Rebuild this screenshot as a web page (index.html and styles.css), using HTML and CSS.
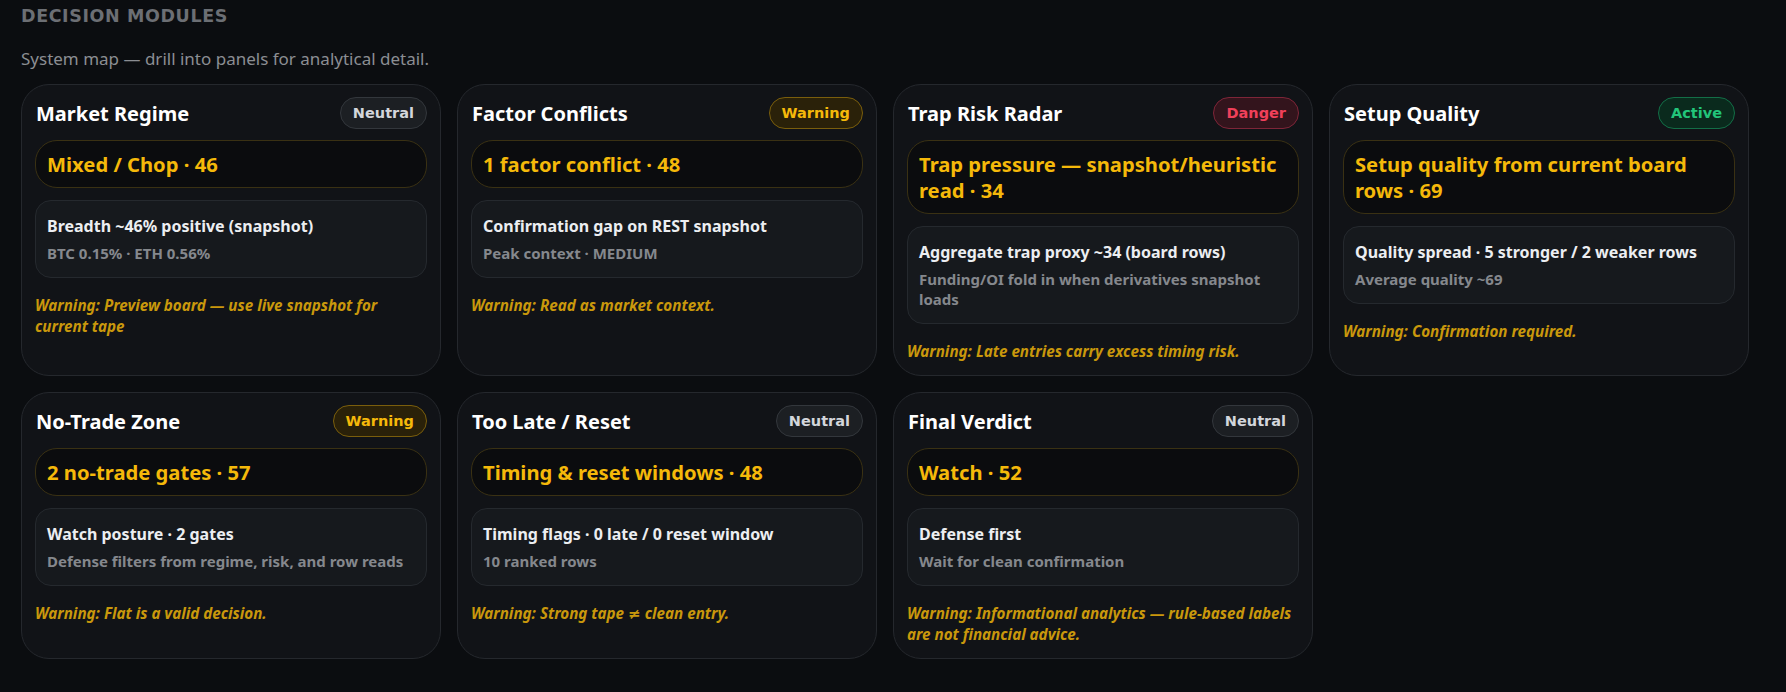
FILE: index.html
```html
<!DOCTYPE html>
<html lang="en">
<head>
<meta charset="utf-8">
<title>Decision Modules</title>
<link rel="stylesheet" href="styles.css">
</head>
<body>
<section class="modules">
  <h2 class="modules-title">DECISION MODULES</h2>
  <p class="modules-sub">System map — drill into panels for analytical detail.</p>
  <div class="grid">
    <article class="card">
      <div class="card-head"><h3 class="card-title">Market Regime</h3><span class="badge neutral">Neutral</span></div>
      <div class="headline">Mixed / Chop · 46</div>
      <div class="detail"><div class="detail-main">Breadth ~46% positive (snapshot)</div><div class="detail-sub">BTC 0.15% · ETH 0.56%</div></div>
      <p class="warn">Warning: Preview board — use live snapshot for current tape</p>
    </article>
    <article class="card">
      <div class="card-head"><h3 class="card-title">Factor Conflicts</h3><span class="badge warning">Warning</span></div>
      <div class="headline">1 factor conflict · 48</div>
      <div class="detail"><div class="detail-main">Confirmation gap on REST snapshot</div><div class="detail-sub">Peak context · MEDIUM</div></div>
      <p class="warn">Warning: Read as market context.</p>
    </article>
    <article class="card">
      <div class="card-head"><h3 class="card-title">Trap Risk Radar</h3><span class="badge danger">Danger</span></div>
      <div class="headline">Trap pressure — snapshot/heuristic read · 34</div>
      <div class="detail"><div class="detail-main">Aggregate trap proxy ~34 (board rows)</div><div class="detail-sub">Funding/OI fold in when derivatives snapshot loads</div></div>
      <p class="warn">Warning: Late entries carry excess timing risk.</p>
    </article>
    <article class="card">
      <div class="card-head"><h3 class="card-title">Setup Quality</h3><span class="badge active">Active</span></div>
      <div class="headline">Setup quality from current board rows · 69</div>
      <div class="detail"><div class="detail-main">Quality spread · 5 stronger / 2 weaker rows</div><div class="detail-sub">Average quality ~69</div></div>
      <p class="warn">Warning: Confirmation required.</p>
    </article>
    <article class="card">
      <div class="card-head"><h3 class="card-title">No-Trade Zone</h3><span class="badge warning">Warning</span></div>
      <div class="headline">2 no-trade gates · 57</div>
      <div class="detail"><div class="detail-main">Watch posture · 2 gates</div><div class="detail-sub">Defense filters from regime, risk, and row reads</div></div>
      <p class="warn">Warning: Flat is a valid decision.</p>
    </article>
    <article class="card">
      <div class="card-head"><h3 class="card-title">Too Late / Reset</h3><span class="badge neutral">Neutral</span></div>
      <div class="headline">Timing &amp; reset windows · 48</div>
      <div class="detail"><div class="detail-main">Timing flags · 0 late / 0 reset window</div><div class="detail-sub">10 ranked rows</div></div>
      <p class="warn">Warning: Strong tape <span class="sym">≠</span> clean entry.</p>
    </article>
    <article class="card">
      <div class="card-head"><h3 class="card-title">Final Verdict</h3><span class="badge neutral">Neutral</span></div>
      <div class="headline">Watch · 52</div>
      <div class="detail"><div class="detail-main">Defense first</div><div class="detail-sub">Wait for clean confirmation</div></div>
      <p class="warn">Warning: Informational analytics — rule-based labels are not financial advice.</p>
    </article>
  </div>
</section>
</body>
</html>
```

FILE: styles.css
```css
* { box-sizing: border-box; }
html, body { margin: 0; padding: 0; }
body {
  background: #0b0d10;
  color: #e6e8eb;
  font-family: "Noto Sans", "Open Sans", sans-serif;
}
.modules {
  padding: 4px 37px 20px 21px;
}
.modules-title {
  margin: 0;
  font-family: "DejaVu Sans", sans-serif;
  font-weight: 700;
  font-size: 17.5px;
  line-height: 24px;
  letter-spacing: 0.6px;
  color: #6c6f74;
}
.modules-sub {
  margin: 19px 0 13px;
  font-size: 17px;
  line-height: 24px;
  color: #8b8e93;
}
.grid {
  display: grid;
  grid-template-columns: repeat(4, 1fr);
  gap: 16px;
}
.card {
  background: #111317;
  border: 1px solid #25282d;
  border-radius: 28px;
  padding: 12px 13px 13px 13px;
  display: flex;
  flex-direction: column;
  gap: 11px;
}
.card-head {
  display: flex;
  align-items: center;
  justify-content: space-between;
}
.card-title {
  margin: 0 0 0 1px;
  font-size: 20px;
  font-weight: 700;
  color: #ffffff;
}
.badge {
  height: 32px;
  line-height: 30px;
  padding: 0 12px;
  border-radius: 16px;
  border: 1px solid;
  font-family: "DejaVu Sans", sans-serif;
  font-weight: 700;
  font-size: 14.5px;
}
.badge.neutral { background: #1c1f23; border-color: #33373c; color: #d3d6db; }
.badge.warning { background: #2a2109; border-color: #7a5e0c; color: #f5b90a; }
.badge.danger { background: #33141c; border-color: #7e2538; color: #f0405a; }
.badge.active { background: #0a2a1d; border-color: #136e47; color: #22c57a; }
.headline {
  background: #0b0c0e;
  border: 1px solid #3a3113;
  border-radius: 22px;
  padding: 10px 10px 10px 11px;
  font-size: 20.2px;
  line-height: 26px;
  font-weight: 700;
  color: #f5b90a;
}
.detail {
  background: #16191d;
  border: 1px solid #25292e;
  border-radius: 16px;
  padding: 14px 11px;
  margin-top: 1px;
}
.detail-main {
  font-size: 16px;
  line-height: 22px;
  font-weight: 700;
  color: #eceef1;
}
.detail-sub {
  margin-top: 6px;
  font-size: 15px;
  line-height: 20px;
  font-weight: 700;
  color: #85888d;
}
.warn {
  margin: 6px 0 0 0;
  font-size: 15.2px;
  line-height: 21px;
  font-weight: 700;
  font-style: italic;
  color: #c9980c;
}
.sym {
  font-family: "DejaVu Sans", sans-serif;
  font-style: normal;
}
```
